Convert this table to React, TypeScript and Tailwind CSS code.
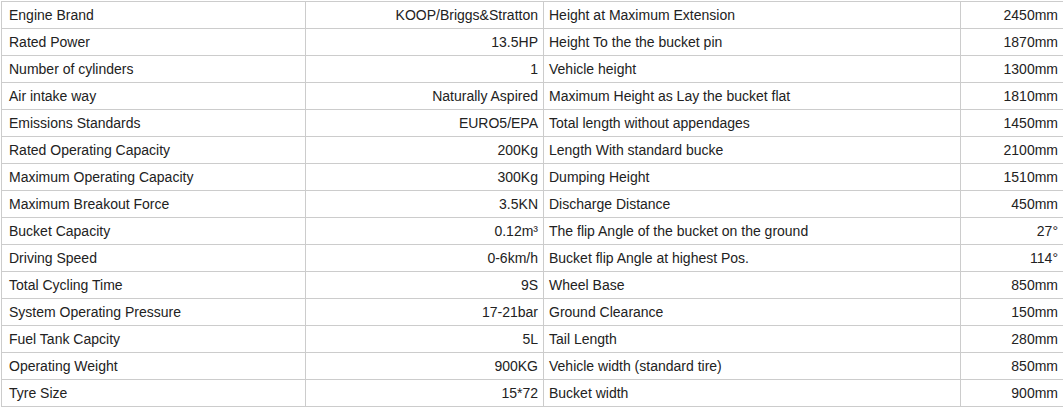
const specs: [string, string, string, string][] = [
  ['Engine Brand', 'KOOP/Briggs&Stratton', 'Height at Maximum Extension', '2450mm'],
  ['Rated Power', '13.5HP', 'Height To the the bucket pin', '1870mm'],
  ['Number of cylinders', '1', 'Vehicle height', '1300mm'],
  ['Air intake way', 'Naturally Aspired', 'Maximum Height as Lay the bucket flat', '1810mm'],
  ['Emissions Standards', 'EURO5/EPA', 'Total length without appendages', '1450mm'],
  ['Rated Operating Capacity', '200Kg', 'Length With standard bucke', '2100mm'],
  ['Maximum Operating Capacity', '300Kg', 'Dumping Height', '1510mm'],
  ['Maximum Breakout Force', '3.5KN', 'Discharge Distance', '450mm'],
  ['Bucket Capacity', '0.12m³', 'The flip Angle of the bucket on the ground', '27°'],
  ['Driving Speed', '0-6km/h', 'Bucket flip Angle at highest Pos.', '114°'],
  ['Total Cycling Time', '9S', 'Wheel Base', '850mm'],
  ['System Operating Pressure', '17-21bar', 'Ground Clearance', '150mm'],
  ['Fuel Tank Capcity', '5L', 'Tail Length', '280mm'],
  ['Operating Weight', '900KG', 'Vehicle width (standard tire)', '850mm'],
  ['Tyre Size', '15*72', 'Bucket width', '900mm'],
];

export default function App() {
  return (
    <div className="w-[1063px] h-[408px] overflow-hidden bg-white pt-px pl-px">
      <table
        className="table-fixed border-collapse w-[1066px] text-[14px] text-[#222]"
        style={{ fontFamily: '"Liberation Sans", Arial, sans-serif' }}
      >
        <colgroup>
          <col className="w-[304px]" />
          <col className="w-[238px]" />
          <col className="w-[417px]" />
          <col />
        </colgroup>
        <tbody>
          {specs.map(([label, value, label2, value2]) => (
            <tr key={label} className="h-[27px]">
              <td className="border border-[#cccccc] pl-[7px] pr-1 leading-none">{label}</td>
              <td className="border border-[#cccccc] pr-[5px] text-right leading-none">{value}</td>
              <td className="border border-[#cccccc] pl-[5px] leading-none">{label2}</td>
              <td className="border border-[#cccccc] pr-[8px] text-right leading-none">{value2}</td>
            </tr>
          ))}
        </tbody>
      </table>
    </div>
  );
}
